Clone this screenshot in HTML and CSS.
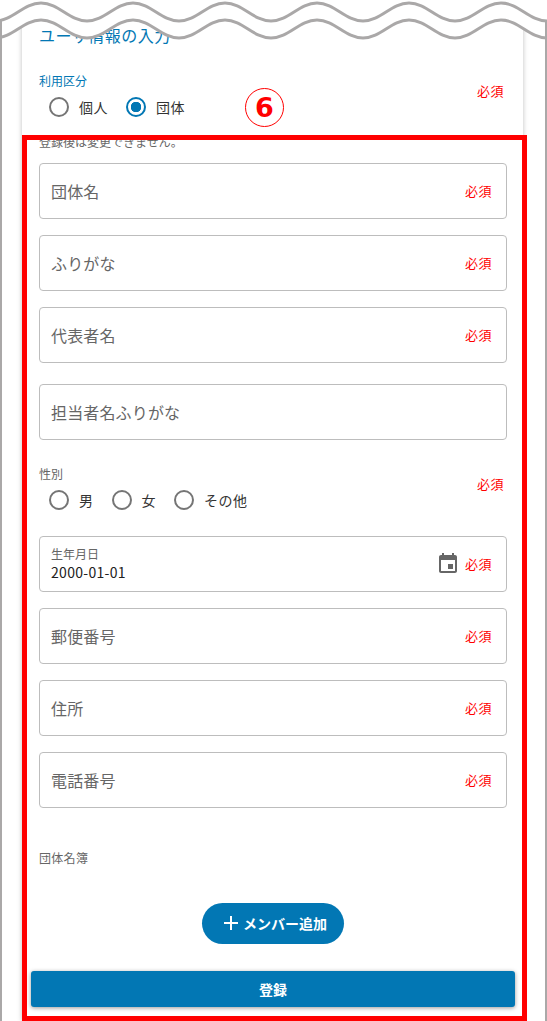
FILE: index.html
```html
<!DOCTYPE html>
<html lang="ja">
<head>
<meta charset="utf-8">
<title>ユーザ情報の入力</title>
<link rel="stylesheet" href="styles.css">
</head>
<body>
<div class="page">
  <main class="card">
    <h2 class="title">ユーザ情報の入力</h2>
    <div class="group">
      <div class="group-main">
        <div class="group-label active">利用区分</div>
        <div class="radios">
          <label class="radio"><span class="dot"></span>個人</label>
          <label class="radio on"><span class="dot"></span>団体</label>
        </div>
      </div>
      <span class="req">必須</span>
    </div>
    <p class="helper">登録後は変更できません。</p>
    <div class="field"><span class="ph">団体名</span><span class="req">必須</span></div>
    <div class="field"><span class="ph">ふりがな</span><span class="req">必須</span></div>
    <div class="field"><span class="ph">代表者名</span><span class="req">必須</span></div>
    <div class="field plain"><span class="ph">担当者名ふりがな</span></div>
    <div class="group gender">
      <div class="group-main">
        <div class="group-label">性別</div>
        <div class="radios">
          <label class="radio"><span class="dot"></span>男</label>
          <label class="radio"><span class="dot"></span>女</label>
          <label class="radio"><span class="dot"></span>その他</label>
        </div>
      </div>
      <span class="req">必須</span>
    </div>
    <div class="field">
      <div class="value-wrap">
        <div class="mini">生年月日</div>
        <div class="value">2000-01-01</div>
      </div>
      <svg class="cal" viewBox="0 0 24 24"><path d="M17 12h-5v5h5v-5zM16 1v2H8V1H6v2H5c-1.11 0-1.99.9-1.99 2L3 19c0 1.1.89 2 2 2h14c1.1 0 2-.9 2-2V5c0-1.1-.9-2-2-2h-1V1h-2zm3 18H5V8h14v11z"/></svg>
      <span class="req">必須</span>
    </div>
    <div class="field"><span class="ph">郵便番号</span><span class="req">必須</span></div>
    <div class="field"><span class="ph">住所</span><span class="req">必須</span></div>
    <div class="field"><span class="ph">電話番号</span><span class="req">必須</span></div>
    <div class="roster">団体名簿</div>
    <div class="add-row">
      <button class="add" type="button">
        <svg viewBox="0 0 16 16"><path d="M7 1h2v6h6v2H9v6H7V9H1V7h6z"/></svg>メンバー追加
      </button>
    </div>
    <button class="submit" type="button">登録</button>
  </main>
</div>
<div class="highlight"></div>
<div class="badge">6</div>
<svg class="wave" viewBox="0 0 547 44">
  <path class="wave-fill" d="M-5 38 C13 38 23 20 41 20 S69 38 87 38 S115 20 133 20 S161 38 179 38 S207 20 225 20 S253 38 271 38 S299 20 317 20 S345 38 363 38 S391 20 409 20 S437 38 455 38 S483 20 501 20 S529 38 547 38 V-10 H-5 Z"/>
  <rect class="wave-edge" x="0" y="20" width="2" height="19"/>
  <rect class="wave-edge" x="545" y="20" width="2" height="19"/>
  <path class="wave-line" d="M-5 21 C13 21 23 3 41 3 S69 21 87 21 S115 3 133 3 S161 21 179 21 S207 3 225 3 S253 21 271 21 S299 3 317 3 S345 21 363 21 S391 3 409 3 S437 21 455 21 S483 3 501 3 S529 21 547 21"/>
  <path class="wave-line" d="M-5 38 C13 38 23 20 41 20 S69 38 87 38 S115 20 133 20 S161 38 179 38 S207 20 225 20 S253 38 271 38 S299 20 317 20 S345 38 363 38 S391 20 409 20 S437 38 455 38 S483 20 501 20 S529 38 547 38"/>
</svg>
</body>
</html>
```
FILE: styles.css
```css
* { box-sizing: border-box; }
html, body { margin: 0; height: 1021px; overflow: hidden; background: #fff; }
body { position: relative; font-family: "Noto Sans CJK JP", "Noto Sans", sans-serif; color: #212121; }
.page { height: 1021px; padding-left: 20px; padding-right: 22px; border-left: 2px solid #aaa8a8; border-right: 2px solid #aaa8a8; }
.card { width: 501px; height: 1021px; padding: 23px 16px 0 17px; background: #fff; box-shadow: 0 0 5px rgba(0,0,0,.25); }
.title { margin: 0; font-size: 16px; line-height: 24px; font-weight: 400; letter-spacing: .5px; color: #0277b4; }
.group { display: flex; justify-content: space-between; margin-top: 27px; height: 50px; }
.group .req { margin-right: 3px; margin-top: 8px; }
.group-main { display: flex; flex-direction: column; }
.group-label { font-size: 12px; line-height: 14px; color: #666; }
.group-label.active { color: #0277b4; }
.radios { display: flex; gap: 18px; margin-top: 6px; padding-left: 10px; }
.radio { display: flex; align-items: center; gap: 10px; font-size: 14px; line-height: 26px; letter-spacing: .5px; color: #333; }
.dot { width: 20px; height: 20px; border-radius: 50%; border: 2px solid #757575; display: block; }
.radio.on .dot { border-color: #0277b4; background: radial-gradient(circle, #0277b4 0 5px, #fff 5.5px); }
.helper { margin: 11px 0 14px; font-size: 12px; line-height: 14px; color: #666; }
.field { display: flex; align-items: center; height: 56px; margin-bottom: 16px; padding: 0 14px 0 11px; border: 1px solid #bdbdbd; border-radius: 4px; }
.field.plain { margin-top: 21px; margin-bottom: 0; }
.ph { flex: 1; font-size: 16px; letter-spacing: .15px; color: #666; }
.req { font-size: 13px; line-height: 18px; letter-spacing: .5px; color: #f00; flex: none; }
.gender { margin-top: 27px; margin-bottom: 16px; height: 53px; }
.value-wrap { flex: 1; }
.mini { font-size: 12px; line-height: 16px; color: #666; }
.value { font-size: 14px; line-height: 20px; letter-spacing: .3px; color: #212121; }
.cal { width: 24px; height: 24px; fill: #666; margin-right: 5px; }
.roster { margin-top: 43px; font-size: 12px; line-height: 14px; letter-spacing: .3px; color: #666; }
.add-row { display: flex; justify-content: center; margin-top: 38px; }
.add { display: flex; align-items: center; gap: 4px; height: 41px; width: 142px; justify-content: center; border: 0; border-radius: 21px; background: #0277b4; color: #fff; font: 700 14px "Noto Sans CJK JP", sans-serif; padding: 0 0 2px 4px; }
.add svg { width: 16px; height: 16px; fill: #fff; }
.submit { display: block; width: 484px; height: 36px; margin: 27px 0 0 -8px; border: 0; border-radius: 3px; background: #0277b4; color: #fff; font: 700 14px "Noto Sans CJK JP", sans-serif; box-shadow: 0 1px 4px rgba(0,0,0,.4); }
.highlight { position: absolute; left: 22px; top: 135px; width: 505px; height: 886px; border: 5px solid #f00; }
.badge { position: absolute; left: 245px; top: 88px; width: 39px; height: 39px; border: 1.5px solid #f00; border-radius: 50%; color: #f00; background: #fff; font: 700 27px/37px "DejaVu Sans", sans-serif; text-align: center; }
.wave { position: absolute; left: 0; top: 0; width: 547px; height: 44px; overflow: visible; }
.wave-fill { fill: #fff; }
.wave-edge { fill: #aaa8a8; }
.wave-line { fill: none; stroke: #aaa8a8; stroke-width: 3; }
```
